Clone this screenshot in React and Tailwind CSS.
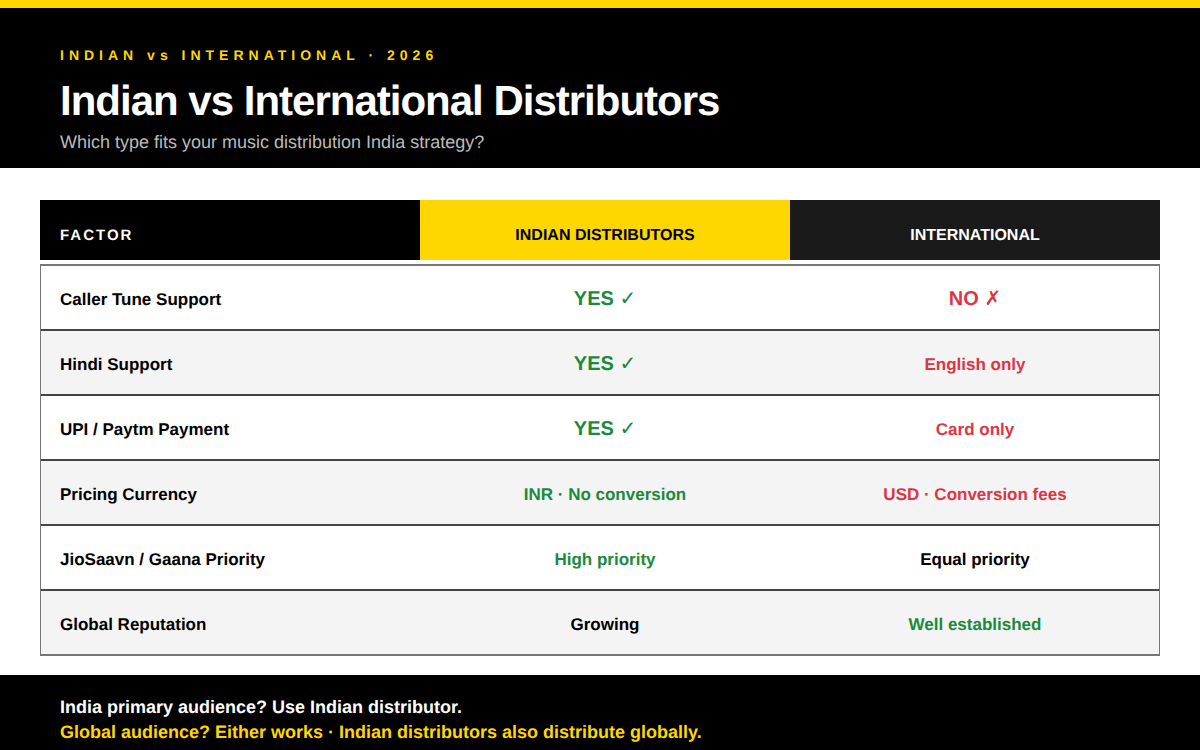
import React from "react";

const GREEN = "text-[#1a8a3c]";
const RED = "text-[#dc3545]";

const rows = [
  { factor: "Caller Tune Support", a: "YES", aMark: "✓", aStyle: `text-[20px] ${GREEN}`, b: "NO", bMark: "✗", bStyle: `text-[20px] ${RED}` },
  { factor: "Hindi Support", a: "YES", aMark: "✓", aStyle: `text-[20px] ${GREEN}`, b: "English only", bStyle: `text-[17px] ${RED}` },
  { factor: "UPI / Paytm Payment", a: "YES", aMark: "✓", aStyle: `text-[20px] ${GREEN}`, b: "Card only", bStyle: `text-[17px] ${RED}` },
  { factor: "Pricing Currency", a: "INR · No conversion", aStyle: `text-[17px] ${GREEN}`, b: "USD · Conversion fees", bStyle: `text-[17px] ${RED}` },
  { factor: "JioSaavn / Gaana Priority", a: "High priority", aStyle: `text-[17px] ${GREEN}`, b: "Equal priority", bStyle: "text-[17px] text-black" },
  { factor: "Global Reputation", a: "Growing", aStyle: "text-[17px] text-black", b: "Well established", bStyle: `text-[17px] ${GREEN}` },
];

function Cell({ text, mark, style }) {
  return (
    <div className={`flex items-baseline justify-center pt-[22px] leading-[23px] ${style}`}>
      <span className="whitespace-pre">
        {text}
        {mark && <span className="font-normal"> {mark}</span>}
      </span>
    </div>
  );
}

export default function App() {
  return (
    <div className="w-[1200px] h-[750px] overflow-hidden bg-white flex flex-col font-['Liberation_Sans',Arial,sans-serif] [text-rendering:geometricPrecision]">
      {/* Header */}
      <div className="h-[168px] bg-black border-t-8 border-[#ffd700] px-[60px] pt-10">
        <div className="text-[14px] leading-[15px] font-bold tracking-[5px] text-[#ffd700]">
          INDIAN vs INTERNATIONAL · 2026
        </div>
        <h1 className="mt-[12px] text-[42px] leading-[52px] font-bold tracking-[-1px] text-white">
          Indian vs International Distributors
        </h1>
        <p className="mt-[5px] text-[18px] leading-[21px] text-[#bbbbbb]">
          Which type fits your music distribution India strategy?
        </p>
      </div>

      {/* Table */}
      <div className="flex-1 px-10 pt-8">
        <div className="grid grid-cols-[380px_370px_370px] h-[60px]">
          <div className="bg-black text-white text-[15px] font-bold tracking-[2px] pl-5 pt-[13px] flex items-center">FACTOR</div>
          <div className="bg-[#ffd700] text-black text-[16px] font-bold pt-[11px] flex items-center justify-center">INDIAN DISTRIBUTORS</div>
          <div className="bg-[#1a1a1a] text-white text-[16px] font-bold pt-[11px] flex items-center justify-center">INTERNATIONAL</div>
        </div>
        <div className="mt-1 border-t-2 border-x border-[#777777]">
          {rows.map((r, i) => (
            <div
              key={r.factor}
              className={`grid grid-cols-[379px_370px_370px] h-[65px] font-bold border-b-2 ${i === rows.length - 1 ? "border-[#777777]" : "border-[#444444]"} ${i % 2 === 1 ? "bg-[#f4f4f4]" : "bg-white"}`}
            >
              <div className="pl-[19px] pt-[22px] leading-[23px] text-[17px] text-black">{r.factor}</div>
              <Cell text={r.a} mark={r.aMark} style={r.aStyle} />
              <Cell text={r.b} mark={r.bMark} style={r.bStyle} />
            </div>
          ))}
        </div>
      </div>

      {/* Footer */}
      <div className="h-[75px] bg-black px-[60px] pt-5 text-[18px] leading-[25px] font-bold">
        <div className="text-white">India primary audience? Use Indian distributor.</div>
        <div className="text-[#ffd700]">Global audience? Either works · Indian distributors also distribute globally.</div>
      </div>
    </div>
  );
}
